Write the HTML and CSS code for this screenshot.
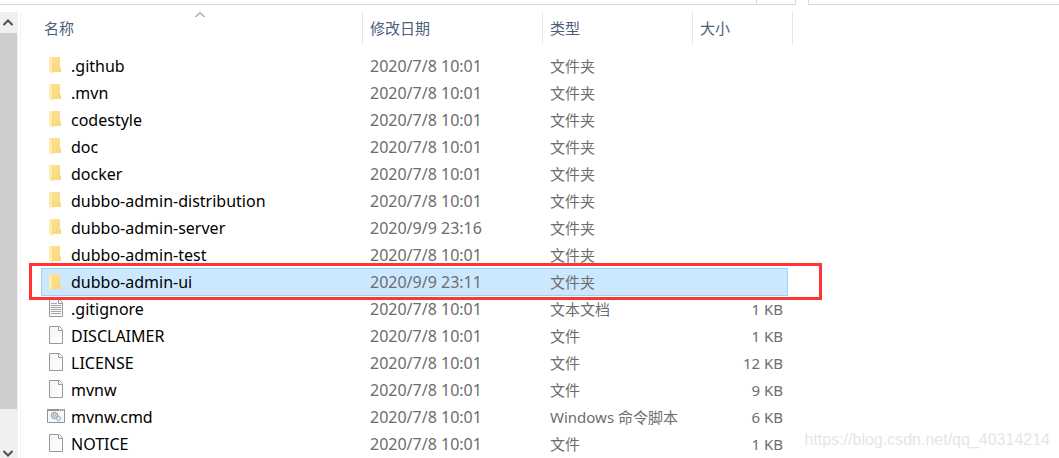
FILE: index.html
```html
<!DOCTYPE html>
<html lang="zh-CN">
  <head>
    <meta charset="UTF-8" />
    <meta name="viewport" content="width=device-width, initial-scale=1.0" />
    <title>dubbo-admin</title>
    <link rel="stylesheet" href="styles.css">
  </head>
  <body>
    <!-- Shared icons -->
    <svg class="sprites" aria-hidden="true">
      <defs>
        <linearGradient id="paper" x1="0" y1="0" x2="1" y2="1">
          <stop offset="0" stop-color="#f2f4f5" />
          <stop offset="1" stop-color="#ffffff" />
        </linearGradient>
        <linearGradient id="gold" x1="0" y1="0" x2="1" y2="1">
          <stop offset="0" stop-color="#ffe39a" />
          <stop offset="1" stop-color="#f8d775" />
        </linearGradient>
      </defs>
      <symbol id="folder" viewBox="0 0 18 20">
        <path d="M3 1H13V11L14 12V16H4Z" fill="url(#gold)" />
        <path d="M2 1H3L6 4V16L5 18L2 16Z" fill="#ffeab0" />
        <path d="M5 3H6V15L5 18Z" fill="#f5d98a" />
      </symbol>
      <symbol id="file" viewBox="0 0 18 20">
        <path d="M2.5 0.5H12.5L15.5 3.5V17.5H2.5Z" fill="url(#paper)" stroke="#999999" />
        <path d="M11.5 0.5V4.5H15.5" fill="#fff" stroke="#999999" />
      </symbol>
      <symbol id="text" viewBox="0 0 18 20">
        <use href="#file" />
        <path d="M4 4.5H10M4 6.5H14M4 8.5H14M4 10.5H14M4 12.5H14M4 14.5H14" stroke="#a5a5a5" />
      </symbol>
      <symbol id="script" viewBox="0 0 18 20">
        <path d="M0.5 2.5H17.5V15.5H0.5Z" fill="#f8f9fa" stroke="#8f9499" />
        <path d="M0 3H18" stroke="#8f9499" stroke-width="2" />
        <path d="M12 3H13M14 3H15M16 3H17" stroke="#fff" />
        <circle cx="7.5" cy="8.5" r="3" fill="#eee" stroke="#8d959c" stroke-width="1.5" stroke-dasharray="1.5 .5" />
        <circle cx="7.5" cy="8.5" r="1" fill="#fff" stroke="#8d959c" />
        <circle cx="11.5" cy="11.5" r="2" fill="#e9f4fb" stroke="#8bb6cf" stroke-width="1.5" stroke-dasharray="1.2 .4" />
      </symbol>
    </svg>

    <div class="toolbar">
      <div class="address"><div class="refresh"></div></div>
      <div class="search"></div>
    </div>

    <div class="explorer">
      <div class="scrollbar">
        <button class="scroll-button" aria-label="向上滚动">
          <svg width="18" height="21"><path d="M3.5 13L8 8.5L12.5 13" /></svg>
        </button>
        <div class="track"><div class="thumb"></div></div>
        <button class="scroll-button" aria-label="向下滚动">
          <svg width="18" height="21"><path d="M3.5 14L8 18.5L12.5 14" /></svg>
        </button>
      </div>

      <main class="content">
        <table class="files">
          <colgroup>
            <col class="col-name" />
            <col class="col-date" />
            <col class="col-type" />
            <col class="col-size" />
            <col class="col-edge" />
          </colgroup>
          <thead>
            <tr>
              <th aria-sort="ascending">
                <button>名称</button>
                <svg class="sort" width="10" height="6"><path d="M0.5 5L5 0.5L9.5 5" /></svg>
              </th>
              <th><button>修改日期</button></th>
              <th><button>类型</button></th>
              <th colspan="2"><button>大小</button></th>
            </tr>
          </thead>
          <tbody>
            <tr><td><svg class="icon"><use href="#folder" /></svg>.github</td><td>2020/7/8 10:01</td><td>文件夹</td><td></td><td></td></tr>
            <tr><td><svg class="icon"><use href="#folder" /></svg>.mvn</td><td>2020/7/8 10:01</td><td>文件夹</td><td></td><td></td></tr>
            <tr><td><svg class="icon"><use href="#folder" /></svg>codestyle</td><td>2020/7/8 10:01</td><td>文件夹</td><td></td><td></td></tr>
            <tr><td><svg class="icon"><use href="#folder" /></svg>doc</td><td>2020/7/8 10:01</td><td>文件夹</td><td></td><td></td></tr>
            <tr><td><svg class="icon"><use href="#folder" /></svg>docker</td><td>2020/7/8 10:01</td><td>文件夹</td><td></td><td></td></tr>
            <tr><td><svg class="icon"><use href="#folder" /></svg>dubbo-admin-distribution</td><td>2020/7/8 10:01</td><td>文件夹</td><td></td><td></td></tr>
            <tr><td><svg class="icon"><use href="#folder" /></svg>dubbo-admin-server</td><td>2020/9/9 23:16</td><td>文件夹</td><td></td><td></td></tr>
            <tr><td><svg class="icon"><use href="#folder" /></svg>dubbo-admin-test</td><td>2020/7/8 10:01</td><td>文件夹</td><td></td><td></td></tr>
            <tr class="selected"><td><svg class="icon"><use href="#folder" /></svg>dubbo-admin-ui</td><td>2020/9/9 23:11</td><td>文件夹</td><td></td><td><span class="marker"></span></td></tr>
            <tr><td><svg class="icon"><use href="#text" /></svg>.gitignore</td><td>2020/7/8 10:01</td><td>文本文档</td><td>1 KB</td><td></td></tr>
            <tr><td><svg class="icon"><use href="#file" /></svg>DISCLAIMER</td><td>2020/7/8 10:01</td><td>文件</td><td>1 KB</td><td></td></tr>
            <tr><td><svg class="icon"><use href="#file" /></svg>LICENSE</td><td>2020/7/8 10:01</td><td>文件</td><td>12 KB</td><td></td></tr>
            <tr><td><svg class="icon"><use href="#file" /></svg>mvnw</td><td>2020/7/8 10:01</td><td>文件</td><td>9 KB</td><td></td></tr>
            <tr><td><svg class="icon"><use href="#script" /></svg>mvnw.cmd</td><td>2020/7/8 10:01</td><td>Windows 命令脚本</td><td>6 KB</td><td></td></tr>
            <tr><td><svg class="icon"><use href="#file" /></svg>NOTICE</td><td>2020/7/8 10:01</td><td>文件</td><td>1 KB</td><td></td></tr>
          </tbody>
        </table>
      </main>
    </div>
    <div class="watermark">https://blog.csdn.net/qq_40314214</div>
  </body>
</html>
```
FILE: styles.css
```css
* {
  box-sizing: border-box;
}

body {
  margin: 0;
  height: 100vh;
  overflow: hidden;
  display: flex;
  flex-direction: column;
  background: #ffffff;
  color: #000000;
  font-family: "Noto Sans", "Noto Sans CJK SC", sans-serif;
  font-size: 15px;
  line-height: 20px;
}

button {
  margin: 0;
  padding: 0;
  border: none;
  background: none;
  color: inherit;
  font: inherit;
}

.sprites {
  position: absolute;
  width: 0;
  height: 0;
}

/* Bottom edge of the address bar and search box */
.toolbar {
  display: flex;
  gap: 12px;
  height: 5px;
  margin-bottom: 7px;
  flex-shrink: 0;
}

.address {
  display: flex;
  justify-content: flex-end;
  flex: 3;
  border: solid #d9d9d9;
  border-width: 0 1px 1px 0;
}

.refresh {
  width: 39px;
  border-left: 1px solid #d9d9d9;
}

.search {
  flex: 0 0 251px;
  border: solid #d9d9d9;
  border-width: 0 0 1px 1px;
}

.explorer {
  display: flex;
  flex: 1;
  min-height: 0;
}

.scrollbar {
  display: flex;
  flex-direction: column;
  width: 18px;
  flex-shrink: 0;
  background: #f0f0f0;
}

.scroll-button {
  height: 21px;
}

.scroll-button svg {
  display: block;
  fill: none;
  stroke: #505050;
  stroke-width: 2;
}

.track {
  flex: 1;
}

.thumb {
  width: 17px;
  height: 93%;
  background: #cdcdcd;
}

.content {
  flex: 1;
  margin-left: 2px;
  padding-left: 20px;
  border-left: 1px solid #f3f3f3;
}

/* File list */
.files {
  table-layout: fixed;
  width: 752px;
  border-collapse: separate;
  border-spacing: 0;
}

.col-name {
  width: 322px;
}

.col-date {
  width: 180px;
}

.col-type {
  width: 150px;
}

.col-size {
  width: 95px;
}

.col-edge {
  width: 5px;
}

th {
  height: 32px;
  padding: 0 0 0 7px;
  border-right: 1px solid #e5e5e5;
  color: #4c607a;
  font-weight: 400;
  text-align: left;
}

th:first-child {
  position: relative;
  padding-left: 3px;
}

.sort {
  position: absolute;
  top: 0;
  left: 50%;
  margin-left: -7px;
  fill: none;
  stroke: #666666;
}

tbody::before {
  content: "";
  display: block;
  height: 8px;
}

td {
  height: 27px;
  padding: 0 0 0 7px;
  color: #6d6d6d;
  white-space: nowrap;
}

td:first-child {
  padding-top: 2px;
  padding-left: 6px;
  color: #000000;
}

td:first-child,
td:nth-child(2) {
  font-size: 16px;
}

td:nth-child(4) {
  padding-right: 5px;
  text-align: right;
}

td:last-child {
  padding: 0;
}

.icon {
  width: 18px;
  height: 20px;
  margin: -1px 6px 1px 0;
  vertical-align: middle;
}

.selected {
  position: relative;
}

.selected td:not(:last-child) {
  background: #cce8ff;
  border-top: 1px solid #99d1ff;
  box-shadow: 0 1px #99d1ff;
}

.selected td:first-child {
  border-left: 1px solid #99d1ff;
  padding-left: 5px;
}

.selected td:nth-child(4) {
  border-right: 1px solid #99d1ff;
}

.marker {
  position: absolute;
  inset: -5px -29px -5px -12px;
  border: 3px solid #fc3636;
}

.watermark {
  position: absolute;
  right: 9px;
  bottom: 8px;
  color: #e6e6e6;
  font-family: "Liberation Sans", sans-serif;
  font-size: 16px;
}
```
